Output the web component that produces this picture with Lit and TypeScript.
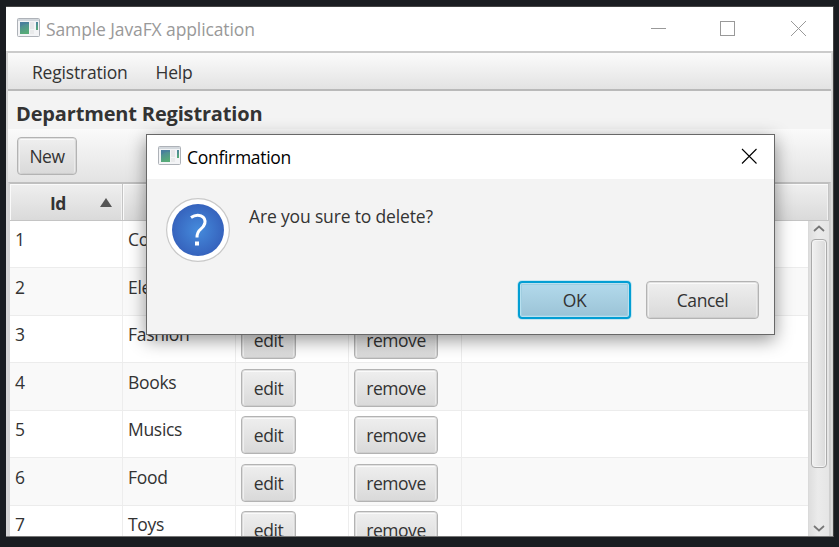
import { LitElement, html, css } from "lit";
import { customElement, property } from "lit/decorators.js";

@customElement("app-icon")
class AppIcon extends LitElement {
  static styles = css`
    :host { display: block; width: 23px; height: 19px; }
    svg { display: block; }
  `;
  render() {
    return html`<svg width="23" height="19" viewBox="0 0 23 19">
      <defs>
        <linearGradient id="g" x1="0" y1="0" x2="0.3" y2="1">
          <stop offset="0" stop-color="#4b7fa3" />
          <stop offset="1" stop-color="#57ab78" />
        </linearGradient>
      </defs>
      <rect x="0.5" y="0.5" width="22" height="18" rx="1" fill="#f3f4f6" stroke="#aeb2b8" />
      <rect x="1" y="1" width="21" height="2" fill="#d3d8dd" />
      <rect x="3" y="4" width="9" height="12" fill="url(#g)" />
      <path d="M3 9Q7 5 12 6V4H3Z" fill="#477b9d" opacity=".6" />
      <rect x="13" y="4" width="4" height="7" fill="#e6e7e9" />
      <rect x="13" y="12" width="4" height="4" fill="#e9eaeb" />
      <rect x="19" y="4" width="2" height="8" fill="url(#g)" />
    </svg>`;
  }
}

@customElement("fx-button")
class FxButton extends LitElement {
  @property({ type: Boolean, reflect: true }) primary = false;
  static styles = css`
    :host {
      display: flex; box-sizing: border-box; height: 38px;
      align-items: center; justify-content: center;
      border: 1px solid #b3b3b3; border-radius: 4px;
      background: linear-gradient(#efefef, #d9d9d9);
      box-shadow: inset 0 0 0 1px #bcbcbc66, inset 0 2px 0 #fafafa, inset 2px 0 0 #f0f0f0, inset -2px 0 0 #eaeaea;
      color: #333; white-space: nowrap;
    }
    :host([primary]) {
      border: 2px solid #039ed3;
      background: linear-gradient(#b3daec, #9bc3d6);
      box-shadow: 0 0 0 1px #c5e6f1, inset 0 0 0 1px #b9e0ef, inset 0 0 0 2px #a0cde0;
    }
  `;
  render() { return html`<slot></slot>`; }
}

@customElement("app-root")
class AppRoot extends LitElement {
  static styles = css`
    * { box-sizing: border-box; }
    :host {
      display: block; position: relative; width: 839px; height: 547px; padding: 6px;
      overflow: hidden; background: #1a1d21; color: #333;
      font: 17.5px/24px "Open Sans", "Noto Sans", sans-serif; letter-spacing: -0.45px;
    }
    .window {
      width: 828px; height: 531px; border: 1px solid #444; border-left-width: 0; border-bottom-color: #777;
      background: #d2d2d2; display: flex; flex-direction: column;
    }
    .titlebar {
      height: 44px; flex: none; background: #fff; display: flex; align-items: flex-start;
      padding: 11px 0 0 11px; color: #999;
    }
    .titlebar span { margin: -1px 0 0 6px; flex: 1; letter-spacing: -0.11px; }
    .controls { display: block; margin: 2px 26px 0 0; }
    .body {
      flex: 1; min-height: 0; margin-right: 1px; border: 2px solid #cbcbcb; border-bottom: 0;
      border-right: 1px solid #dcdcdc; border-left-color: #d5d5d5;
      display: flex; flex-direction: column; background: #f3f3f3;
    }
    .menu {
      height: 38px; flex: none; display: flex; gap: 28px; padding: 7px 0 0 24px; letter-spacing: -0.2px;
      background: linear-gradient(#fbfbfb, #e3e3e3); border-bottom: 2px solid #b9b9b9;
    }
    .heading {
      height: 38px; flex: none; padding: 11px 0 0 8px; font-weight: 700; font-size: 20px;
      letter-spacing: -0.16px; white-space: nowrap;
    }
    .tools {
      height: 53px; flex: none; display: flex; padding: 8px 0 0 9px;
      background: linear-gradient(#fafafa, #e3e3e3);
    }
    .new { width: 60px; }
    .table {
      flex: 1; min-height: 0; border: 2px solid #bfbfbf; border-bottom: 0; border-left-color: #d4d4d4; border-right-color: #cfcfcf;
      display: flex; flex-direction: column; background: #fff;
    }
    .thead, .row { display: grid; grid-template-columns: 113px 113px 113px 113px 1fr; }
    .thead { height: 37px; flex: none; font-weight: 700; background: linear-gradient(#efefef, #dadada); border-bottom: 1px solid #c4c4c4; }
    .th { border-right: 1px solid #c4c4c4; box-shadow: inset 1px 1px 0 #fafafa, inset -1px 0 0 #f2f2f2; display: flex; align-items: center; }
    .id { margin: 2px 0 0 40px; width: 50px; }
    .main { flex: 1; min-height: 0; display: flex; }
    .rows { flex: 1; overflow: hidden; }
    .row { height: 47px; border-bottom: 1px solid #ececec; }
    .row.odd { height: 48px; background: #f9f9f9; }
    .cell { border-right: 1px solid #ededed; padding: 6px 0 0 5px; }
    .cell.text { letter-spacing: -0.3px; }
    .cell.button { padding-top: 5px; }
    .row.odd .cell { padding-top: 7px; }
    .row.odd .button { padding-top: 6px; }
    .cell:last-child { border: 0; }
    .edit { width: 55px; }
    .remove { width: 84px; }
    .scroll {
      width: 21px; display: flex; flex-direction: column; align-items: center; padding-right: 1px;
      background: linear-gradient(90deg, #dedede, #ebebeb 45%, #e5e5e5); border-left: 1px solid #dadada;
    }
    .arrow { display: block; height: 18px; flex: none; }
    .thumb {
      width: 16px; height: 229px; border: 1px solid #aaa; border-radius: 4px;
      background: linear-gradient(90deg, #f1f1f1, #dadada); box-shadow: inset 0 0 0 1px #f4f4f4;
    }
    .space { flex: 1; }
    .dialog {
      position: absolute; left: 146px; top: 134px; width: 629px; height: 201px;
      border: 1px solid #686868; background: #f3f3f3; box-shadow: 0 5px 17px rgba(0,0,0,.42);
      display: flex; flex-direction: column;
    }
    .dtitle { height: 44px; flex: none; background: #fff; color: #000; display: flex; align-items: flex-start; padding: 11px 17px 0 11px; }
    .dtitle span { margin: -1px 0 0 6px; flex: 1; letter-spacing: -0.3px; }
    .dclose { display: block; margin-top: 2px; }
    .content { height: 102px; flex: none; display: flex; padding: 18px 0 0 18px; gap: 18px; }
    .content p { margin: 7px 0 0; letter-spacing: -0.16px; }
    .actions { display: flex; justify-content: flex-end; gap: 15px; padding-right: 15px; }
    .actions fx-button { width: 113px; }
  `;

  departments = ["Computer", "Electronics", "Fashion", "Books", "Musics", "Food", "Toys"];

  render() {
    return html`
      <div class="window">
        <div class="titlebar">
          <app-icon></app-icon><span>Sample JavaFX application</span>
          <svg class="controls" width="156" height="16" viewBox="0 0 156 16" fill="none" stroke="#999">
            <path d="M0 8.5H15" />
            <rect x="69.5" y="1.5" width="14" height="14" />
            <path d="M140 1L155 16M155 1L140 16" />
          </svg>
        </div>
        <div class="body">
          <div class="menu"><span>Registration</span><span>Help</span></div>
          <div class="heading">Department Registration</div>
          <div class="tools"><fx-button class="new">New</fx-button></div>
          <div class="table">
            <div class="thead">
              <div class="th"><span class="id">Id</span>
                <svg width="12" height="9" viewBox="0 0 12 9"><path d="M6 0L12 9H0Z" fill="#555" /></svg>
              </div>
              <div class="th"></div><div class="th"></div><div class="th"></div><div class="th"></div>
            </div>
            <div class="main">
              <div class="rows">
                ${this.departments.map((d, i) => html`
                  <div class="row ${i % 2 ? "odd" : ""}">
                    <div class="cell text">${i + 1}</div>
                    <div class="cell text">${d}</div>
                    <div class="cell button"><fx-button class="edit">edit</fx-button></div>
                    <div class="cell button"><fx-button class="remove">remove</fx-button></div>
                    <div class="cell"></div>
                  </div>`)}
              </div>
              <div class="scroll">
                <svg class="arrow" width="12" height="18" fill="none" stroke="#777" stroke-width="1.7"><path d="M1 10L6 5.5L11 10" /></svg>
                <div class="thumb"></div>
                <div class="space"></div>
                <svg class="arrow" width="12" height="18" fill="none" stroke="#777" stroke-width="1.7"><path d="M1 8L6 12.5L11 8" /></svg>
              </div>
            </div>
          </div>
        </div>
      </div>
      <div class="dialog">
        <div class="dtitle">
          <app-icon></app-icon><span>Confirmation</span>
          <svg class="dclose" width="16" height="16" fill="none" stroke="#000" stroke-width="1.1"><path d="M1 1L15.5 15.5M15.5 1L1 15.5" /></svg>
        </div>
        <div class="content">
          <svg width="66" height="66" viewBox="0 0 66 66">
            <defs><radialGradient id="q"><stop offset="0" stop-color="#458bdc" /><stop offset="1" stop-color="#3663bd" /></radialGradient></defs>
            <circle cx="33" cy="33" r="31.4" fill="#fff" stroke="#c9c9c9" stroke-width="1.2" />
            <circle cx="33" cy="33" r="26" fill="url(#q)" />
            <path d="M26 20.5Q31 17 36 18.8Q41 21 39.8 26.5Q39 29.5 35.5 32.3Q32 35 32 40.5" fill="none" stroke="#fff" stroke-width="3" />
            <rect x="30" y="44.5" width="4" height="4" fill="#fff" />
          </svg>
          <p>Are you sure to delete?</p>
        </div>
        <div class="actions"><fx-button primary>OK</fx-button><fx-button>Cancel</fx-button></div>
      </div>`;
  }
}
